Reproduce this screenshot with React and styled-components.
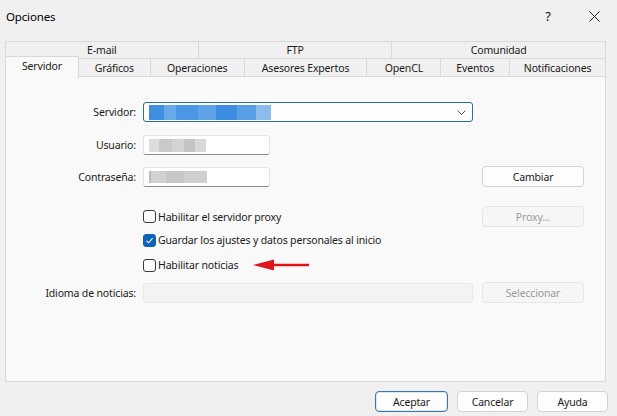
import React from 'react';
import styled, { createGlobalStyle } from 'styled-components';

const Global = createGlobalStyle`
  html, body { margin: 0; padding: 0; background: #f0f0f0; }
  body {
    font-family: "Noto Sans", "Segoe UI", sans-serif;
    font-size: 10.5px;
    letter-spacing: -0.15px;
    color: #1a1a1a;
  }
  * { box-sizing: border-box; }
`;

const Window = styled.div`
  width: 617px;
  height: 416px;
  background: #f0f0f0;
  display: flex;
  flex-direction: column;
  overflow: hidden;
`;

const TitleBar = styled.div`
  height: 32px;
  display: flex;
  align-items: center;
  padding-left: 6px;
  font-size: 11.5px;
  color: #000;
`;

const Title = styled.div`
  flex: 1;
`;

const TitleButton = styled.div`
  width: 46px;
  height: 32px;
  display: flex;
  align-items: center;
  justify-content: center;
  font-size: 13px;
  color: #111;
`;

const Body = styled.div`
  flex: 1;
  display: flex;
  flex-direction: column;
  padding: 9px 11px 0 5px;
`;

const TabRow = styled.div`
  display: flex;
  height: ${p => p.$h}px;
  margin-top: ${p => p.$top || 0}px;
  align-items: flex-end;
  position: relative;
  z-index: ${p => p.$z};
`;

const Tab = styled.div`
  width: ${p => p.$w}px;
  height: ${p => (p.$active ? p.$h + 3 : p.$h)}px;
  margin-bottom: ${p => (p.$active ? -1 : 0)}px;
  margin-left: -1px;
  &:first-child { margin-left: 0; }
  display: flex;
  align-items: center;
  justify-content: center;
  padding-bottom: ${p => (p.$active ? 3 : 0)}px;
  background: ${p => (p.$active ? '#f9f9f9' : '#f0f0f0')};
  border: 1px solid #d9d9d9;
  border-bottom: ${p => (p.$active ? 'none' : '1px solid #d9d9d9')};
  color: #1a1a1a;
`;

const Panel = styled.div`
  height: 306px;
  background: #f9f9f9;
  border: 1px solid #d9d9d9;
  margin-top: -1px;
  display: flex;
  flex-direction: column;
  padding-top: 25px;
`;

const Row = styled.div`
  display: grid;
  grid-template-columns: 130px 330px 102px;
  column-gap: 7px;
  align-items: center;
  height: ${p => p.$h || 20}px;
  margin-top: ${p => p.$top || 0}px;
  & > :nth-child(3) { margin-left: 2px; }
`;

const Label = styled.label`
  text-align: right;
  color: #1a1a1a;
`;

const Combo = styled.div`
  height: 20px;
  border: 1px solid #2a6f9c;
  border-radius: 3px;
  background: #fff;
  display: flex;
  align-items: center;
  padding: 0 5px;
`;

const Blur = styled.div`
  width: ${p => p.$w}px;
  height: ${p => p.$h}px;
  background: ${p => p.$bg};
  flex: none;
`;

const Chevron = styled.svg`
  margin-left: auto;
  margin-right: 1px;
`;

const Input = styled.div`
  width: ${p => (p.$wide ? 330 : 127)}px;
  height: 20px;
  background: ${p => (p.$disabled ? '#f3f3f3' : '#fff')};
  border: 1px solid ${p => (p.$disabled ? '#e8e8e8' : '#e4e4e4')};
  border-bottom-color: ${p => (p.$disabled ? '#e8e8e8' : '#8a8a8a')};
  border-radius: 3px;
  display: flex;
  align-items: center;
  padding: 0 5px;
`;

const Button = styled.div`
  width: ${p => p.$w || 102}px;
  height: 21px;
  border-radius: 4px;
  display: flex;
  align-items: center;
  justify-content: center;
  background: ${p => (p.$disabled ? '#f6f6f6' : '#fdfdfd')};
  border: 1px solid ${p => (p.$primary ? '#3b77a5' : p.$disabled ? '#e6e6e6' : '#d2d2d2')};
  box-shadow: ${p => (p.$primary ? 'inset 0 0 0 1px #dce8f1' : 'none')};
  color: ${p => (p.$disabled ? '#9a9a9a' : '#1a1a1a')};
`;

const Check = styled.div`
  display: flex;
  align-items: center;
  gap: 2px;
`;

const Box = styled.div`
  width: 13px;
  height: 13px;
  border-radius: 3px;
  border: 1px solid ${p => (p.$checked ? '#0f62b8' : '#3a3a3a')};
  background: ${p => (p.$checked ? '#0f62b8' : '#fff')};
  display: flex;
  align-items: center;
  justify-content: center;
  flex: none;
`;

const Arrow = styled.svg`
  margin-left: 13px;
  flex: none;
`;

const Footer = styled.div`
  display: flex;
  justify-content: flex-end;
  gap: 9px;
  padding-top: 9px;
  margin-right: -2px;
`;

const pixelBlue =
  'linear-gradient(90deg, #3f8fe0 0 12%, #6aa9e8 12% 22%, #4b97e3 22% 40%, #5fa2e6 40% 55%, #3d8de0 55% 72%, #5a9fe6 72% 88%, #8cbcec 88% 100%)';
const pixelGray =
  'linear-gradient(90deg, #dcdcdc 0 18%, #c9c9c9 18% 40%, #d3d3d3 40% 62%, #c4c4c4 62% 80%, #d8d8d8 80% 100%)';
const pixelGray2 =
  'linear-gradient(90deg, #bcbcbc 0 4%, #d2d2d2 4% 30%, #c7c7c7 30% 60%, #cfcfcf 60% 100%)';

const tabsBack = [
  { label: 'E-mail', w: 194 },
  { label: 'FTP', w: 195 },
  { label: 'Comunidad', w: 215 },
];

const tabsFront = [
  { label: 'Servidor', w: 74, active: true },
  { label: 'Gráficos', w: 73 },
  { label: 'Operaciones', w: 95 },
  { label: 'Asesores Expertos', w: 124 },
  { label: 'OpenCL', w: 75 },
  { label: 'Eventos', w: 70 },
  { label: 'Notificaciones', w: 97 },
];

function CheckRow({ checked, label, children }) {
  return (
    <Check>
      <Box $checked={checked}>
        {checked && (
          <svg width="9" height="9" viewBox="0 0 9 9">
            <path d="M1.5 4.8 L3.6 6.8 L7.6 2.2" fill="none" stroke="#fff" strokeWidth="1.1" />
          </svg>
        )}
      </Box>
      <span>{label}</span>
      {children}
    </Check>
  );
}

export default function App() {
  return (
    <Window>
      <Global />
      <TitleBar>
        <Title>Opciones</Title>
        <TitleButton>?</TitleButton>
        <TitleButton>
          <svg width="11" height="11" viewBox="0 0 11 11">
            <path d="M0.5 0.5 L10.5 10.5 M10.5 0.5 L0.5 10.5" stroke="#222" strokeWidth="1" />
          </svg>
        </TitleButton>
      </TitleBar>
      <Body>
        <TabRow $h={18} $z={1}>
          {tabsBack.map(t => (
            <Tab key={t.label} $w={t.w} $h={18}>{t.label}</Tab>
          ))}
        </TabRow>
        <TabRow $h={19} $z={2} $top={-1}>
          {tabsFront.map(t => (
            <Tab key={t.label} $w={t.w} $h={19} $active={t.active}>{t.label}</Tab>
          ))}
        </TabRow>
        <Panel>
          <Row>
            <Label>Servidor:</Label>
            <Combo>
              <Blur $w={122} $h={15} $bg={pixelBlue} />
              <Chevron width="9" height="5" viewBox="0 0 9 5">
                <path d="M0.5 0.5 L4.5 4.5 L8.5 0.5" fill="none" stroke="#555" strokeWidth="1" />
              </Chevron>
            </Combo>
          </Row>
          <Row $top={13}>
            <Label>Usuario:</Label>
            <Input>
              <Blur $w={57} $h={13} $bg={pixelGray} />
            </Input>
          </Row>
          <Row $top={11}>
            <Label>Contraseña:</Label>
            <Input>
              <Blur $w={58} $h={12} $bg={pixelGray2} />
            </Input>
            <Button>Cambiar</Button>
          </Row>
          <Row $top={20} $h={21}>
            <span />
            <CheckRow label="Habilitar el servidor proxy" />
            <Button $disabled>Proxy...</Button>
          </Row>
          <Row $top={3}>
            <span />
            <CheckRow checked label="Guardar los ajustes y datos personales al inicio" />
          </Row>
          <Row $top={5}>
            <span />
            <CheckRow label="Habilitar noticias">
              <Arrow width="56" height="12" viewBox="0 0 56 12">
                <path d="M0 6 L21 0.5 L21 4.8 L56 4.8 L56 7.2 L21 7.2 L21 11.5 Z" fill="#e0141b" />
              </Arrow>
            </CheckRow>
          </Row>
          <Row $top={7} $h={21}>
            <Label>Idioma de noticias:</Label>
            <Input $disabled $wide />
            <Button $disabled>Seleccionar</Button>
          </Row>
        </Panel>
        <Footer>
          <Button $w={73} $primary>Aceptar</Button>
          <Button $w={71}>Cancelar</Button>
          <Button $w={71}>Ayuda</Button>
        </Footer>
      </Body>
    </Window>
  );
}
